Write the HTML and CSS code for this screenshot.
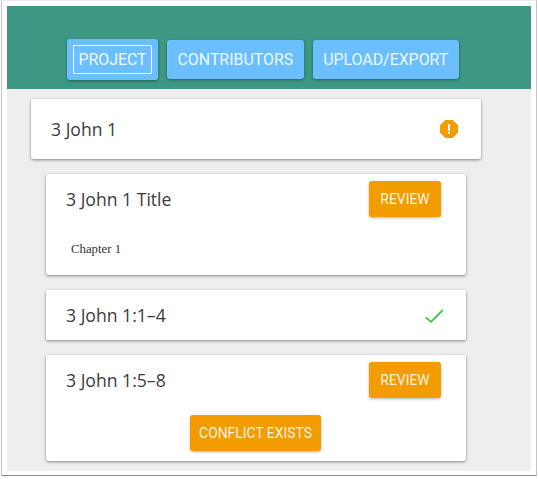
FILE: index.html
```html
<!DOCTYPE html>
<html lang="en">
<head>
<meta charset="utf-8">
<title>3 John 1</title>
<link rel="stylesheet" href="styles.css">
</head>
<body>
<div class="frame">
  <div class="app">
    <header class="header">
      <nav class="nav">
        <button class="nav-btn nav-btn-active"><span class="focus">PROJECT</span></button>
        <button class="nav-btn">CONTRIBUTORS</button>
        <button class="nav-btn">UPLOAD/EXPORT</button>
      </nav>
    </header>
    <main class="main">
      <section class="card card-top">
        <h2 class="title">3 John 1</h2>
        <svg class="alert" width="18" height="18" viewBox="0 0 18 18" aria-hidden="true">
          <polygon points="5.3,0 12.7,0 18,5.3 18,12.7 12.7,18 5.3,18 0,12.7 0,5.3" fill="#f39c00"/>
          <rect x="8" y="4" width="2" height="7" fill="#fff"/>
          <rect x="8" y="12" width="2" height="2" fill="#fff"/>
        </svg>
      </section>
      <div class="list">
        <section class="card sub sub-title">
          <div class="row">
            <h3 class="title">3 John 1 Title</h3>
            <button class="action">REVIEW</button>
          </div>
          <p class="chapter">Chapter 1</p>
        </section>
        <section class="card sub sub-check">
          <h3 class="title">3 John 1:1–4</h3>
          <svg class="check" width="20" height="15" viewBox="0 0 20 15" aria-hidden="true">
            <path d="M1.8 9.6 L7 13.8 L18.8 2" fill="none" stroke="#4cc256" stroke-width="1.9"/>
          </svg>
        </section>
        <section class="card sub sub-conflict">
          <div class="row">
            <h3 class="title">3 John 1:5–8</h3>
            <button class="action">REVIEW</button>
          </div>
          <div class="center">
            <button class="action">CONFLICT EXISTS</button>
          </div>
        </section>
      </div>
    </main>
  </div>
</div>
</body>
</html>
```
FILE: styles.css
```css
* { box-sizing: border-box; }
html, body { margin: 0; height: 100%; background: #fff; overflow: hidden; }
.frame {
  width: 536px;
  height: 476px;
  margin-left: 1px;
  padding: 5px 4px 4px 5px;
  background: #fff;
  border: 1px solid #c4c4c4;
  border-top-color: #ececec;
  border-bottom-color: #8f8f8f;
}
.app { width: 524px; height: 465px; background: #eee; }
.header {
  height: 83px;
  background: #3d9782;
  padding: 33px 0 0 60px;
}
.nav { display: flex; align-items: flex-start; gap: 9px; }
button { border: 0; font-family: Roboto, sans-serif; font-weight: 400; color: rgba(255,255,255,.92); cursor: pointer; }
.nav-btn {
  height: 39px;
  margin-top: 1px;
  padding: 0 10.5px;
  border-radius: 3px;
  background: #6bbfff;
  font-size: 15.9px;
  box-shadow: 0 1px 3px rgba(0,0,0,.35);
}
.nav-btn-active {
  width: 91px;
  height: 41px;
  margin-top: 0;
  padding: 0;
  display: flex;
  align-items: center;
  justify-content: center;
}
.focus {
  display: block;
  width: 79px;
  height: 29px;
  line-height: 27px;
  border: 1px solid #fff;
  text-align: center;
}
.main { padding-top: 10px; }
.card {
  background: #fff;
  border-radius: 2px;
  box-shadow: 0 1px 3px rgba(0,0,0,.45);
}
.card-top {
  width: 450px;
  height: 60px;
  margin-left: 24px;
  padding: 0 20px;
  display: flex;
  align-items: center;
  justify-content: space-between;
}
.card-top .alert { margin-right: 3px; }
.title {
  margin: 0;
  font-family: "Open Sans", sans-serif;
  font-size: 17.6px;
  font-weight: 400;
  color: #3b3b3b;
  line-height: 24px;
}
.list {
  width: 420px;
  margin: 15px 0 0 39px;
  display: flex;
  flex-direction: column;
  gap: 15px;
}
.sub { padding: 0 25px 0 20px; }
.row { display: flex; align-items: center; justify-content: space-between; height: 36px; }
.sub-title { height: 101px; padding-top: 7px; }
.sub-conflict { height: 106px; padding-top: 7px; }
.sub-check {
  height: 50px;
  display: flex;
  align-items: center;
  justify-content: space-between;
  padding-right: 22px;
}
.action {
  height: 36px;
  padding: 0 11px;
  min-width: 72px;
  border-radius: 3px;
  background: #f39c00;
  font-size: 13.9px;
  box-shadow: 0 1px 3px rgba(0,0,0,.3);
}
.center { display: flex; justify-content: center; padding-top: 17px; }
.center .action { padding: 0 9px; margin-left: 4px; }
.chapter {
  margin: 24px 0 0 5px;
  font-family: "Liberation Serif", serif;
  font-size: 12.8px;
  line-height: 16px;
  color: #333;
}
```
